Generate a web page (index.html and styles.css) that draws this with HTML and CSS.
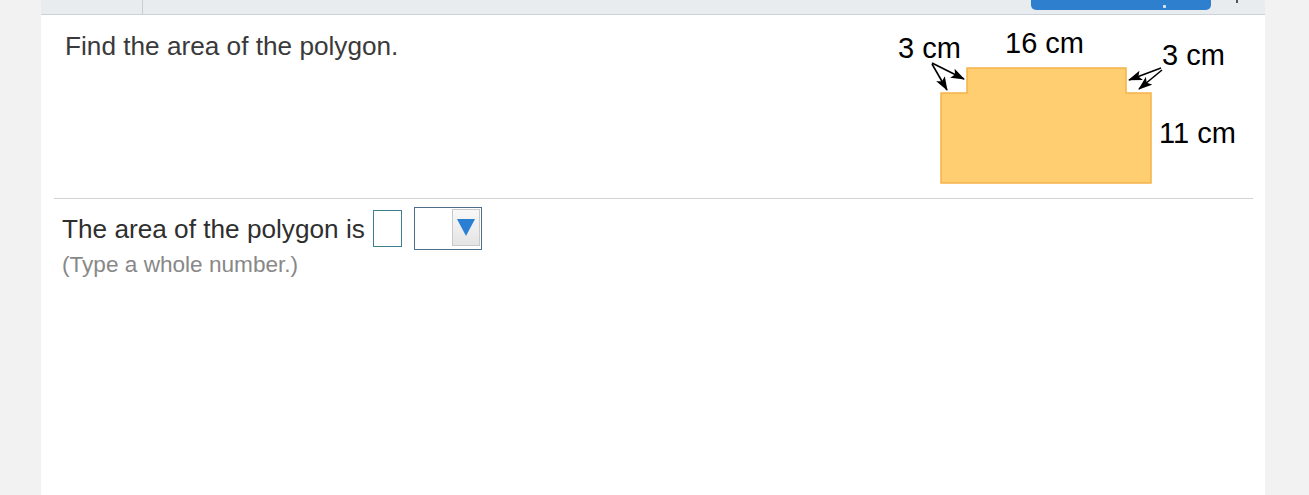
FILE: index.html
```html
<!DOCTYPE html>
<html>
<head>
<meta charset="utf-8">
<link rel="stylesheet" href="styles.css">
</head>
<body>
<div class="panel">
  <div class="topbar">
    <div class="tab"></div>
    <div class="spacer"></div>
    <div class="topbtn"><span class="btnmark"></span></div>
    <div class="iconarea"><span class="dot"></span></div>
  </div>
  <div class="question">
    <div class="qtext">Find the area of the polygon.</div>
    <svg class="figure" width="360" height="183" viewBox="0 0 360 183">
      <defs>
        <marker id="ah" markerWidth="14" markerHeight="10" refX="13" refY="5" orient="auto" markerUnits="userSpaceOnUse">
          <path d="M0,0 L14,5 L0,10 L3,5 Z" fill="#000"/>
        </marker>
      </defs>
      <polygon points="51,78 77,78 77,53 236,53 236,78 261,78 261,168 51,168" fill="#ffce70" stroke="#f6b24a" stroke-width="1.5"/>
      <line x1="42" y1="48" x2="74" y2="64" stroke="#000" stroke-width="1.6" marker-end="url(#ah)"/>
      <line x1="42" y1="49" x2="57" y2="75" stroke="#000" stroke-width="1.6" marker-end="url(#ah)"/>
      <line x1="271" y1="53" x2="239" y2="65" stroke="#000" stroke-width="1.6" marker-end="url(#ah)"/>
      <line x1="272" y1="55" x2="249" y2="74" stroke="#000" stroke-width="1.6" marker-end="url(#ah)"/>
      <text x="8" y="43" class="lbl">3 cm</text>
      <text x="115" y="38" class="lbl">16 cm</text>
      <text x="272" y="50" class="lbl">3 cm</text>
      <text x="269" y="128" class="lbl">11 cm</text>
    </svg>
  </div>
  <div class="divider"></div>
  <div class="answer">
    <div class="row">
      <span class="atext">The area of the polygon is</span>
      <span class="inputbox"></span>
      <span class="select"><span class="selbtn"><span class="tri"></span></span></span>
    </div>
    <div class="hint">(Type a whole number.)</div>
  </div>
</div>
</body>
</html>
```
FILE: styles.css
```css
html, body {
  margin: 0;
  padding: 0;
}
body {
  background: #f2f2f2;
  font-family: "Liberation Sans", Arial, sans-serif;
}
.panel {
  margin-left: 41px;
  width: 1224px;
  min-height: 495px;
  background: #ffffff;
}
.topbar {
  height: 14px;
  background: #e9ecef;
  border-bottom: 1px solid #cdd2d6;
  display: flex;
  align-items: flex-start;
}
.tab {
  width: 101px;
  height: 14px;
  border-right: 1px solid #c9ced3;
}
.spacer {
  flex: 1;
}
.topbtn {
  width: 180px;
  height: 10px;
  background: #2f7fcf;
  border-radius: 0 0 5px 5px;
  display: flex;
  justify-content: center;
}
.btnmark {
  width: 3px;
  height: 3px;
  margin-left: 86px;
  margin-top: 5px;
  background: #d9e8f7;
  border-radius: 1px;
}
.iconarea {
  width: 54px;
  height: 14px;
  display: flex;
  justify-content: center;
}
.dot {
  width: 2px;
  height: 3px;
  background: #555;
  margin-left: -2px;
}
.question {
  height: 183px;
  display: flex;
  justify-content: space-between;
  align-items: flex-start;
  padding: 0 15px 0 24px;
}
.qtext {
  margin-top: 16px;
  font-size: 26.2px;
  line-height: 30px;
  color: #3a3a3a;
}
.figure {
  display: block;
}
.lbl {
  font-family: "Liberation Sans", Arial, sans-serif;
  font-size: 29px;
  fill: #000;
}
.divider {
  height: 0;
  border-top: 1px solid #d0d2d4;
  margin: 0 12px 0 13px;
}
.answer {
  padding-left: 21px;
}
.row {
  display: flex;
  align-items: flex-start;
  height: 49px;
}
.atext {
  margin-top: 15px;
  font-size: 26.2px;
  line-height: 30px;
  color: #2f2f2f;
}
.inputbox {
  margin-top: 11px;
  margin-left: 8px;
  width: 27px;
  height: 35px;
  border: 1px solid #3d7f8c;
}
.select {
  margin-top: 8px;
  margin-left: 12px;
  width: 66px;
  height: 40px;
  border: 1px solid #4d6e8b;
  display: flex;
  justify-content: flex-end;
  align-items: flex-start;
  padding: 1px 0 0 0;
  box-sizing: content-box;
}
.selbtn {
  width: 26px;
  height: 35px;
  margin-right: 1px;
  border: 1px solid #c9c9c9;
  background: linear-gradient(#f8f8f8, #e4e4e4);
  display: flex;
  justify-content: center;
  align-items: center;
}
.tri {
  width: 0;
  height: 0;
  border-left: 9px solid transparent;
  border-right: 9px solid transparent;
  border-top: 17px solid #2b7fd3;
}
.hint {
  margin-top: 4px;
  font-size: 22.6px;
  line-height: 26px;
  color: #888888;
}
```
